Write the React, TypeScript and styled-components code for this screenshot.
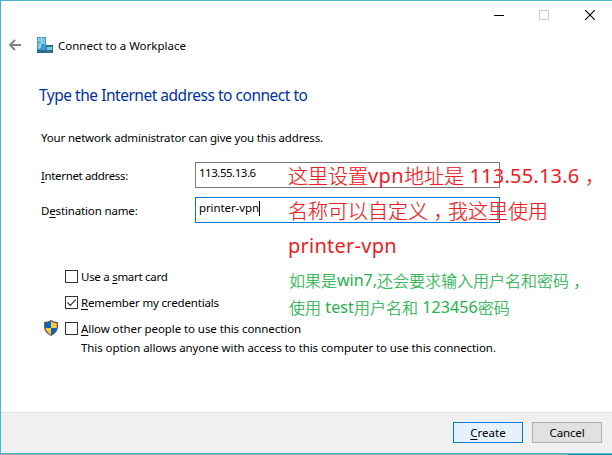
import React from "react";
import styled, { createGlobalStyle } from "styled-components";

const GlobalStyle = createGlobalStyle`
  * { box-sizing: border-box; }
  body { margin: 0; background: #fff; overflow: hidden; }
`;

const Window = styled.div`
  position: relative;
  width: 612px;
  height: 455px;
  display: flex;
  flex-direction: column;
  background: #fff;
  border-top: 1px solid #4bb6c6;
  border-left: 1px solid #4bb6c6;
  color: #000;
  font: 11.5px/16px "Noto Sans", "Open Sans", sans-serif;
`;

const TitleBar = styled.div`
  display: grid;
  grid-template-columns: 45px 46px 10px;
  justify-content: end;
  height: 29px;
  padding: 9px 17px 0 0;
`;

const Header = styled.header`
  display: flex;
  align-items: center;
  height: 30px;
  padding-left: 7px;
`;

const Title = styled.span`
  padding-top: 2px;
`;

const BackIcon = styled.svg`
  width: 14px;
  height: 12px;
  margin-right: 15px;
`;

const BuildingIcon = styled.svg`
  width: 16px;
  height: 16px;
  margin-right: 5px;
`;

const Text = styled.span<{ $ls?: number }>`
  white-space: pre;
  letter-spacing: ${(p) => p.$ls ?? 0}px;
  u { text-underline-offset: 2px; text-decoration-thickness: 1px; text-decoration-skip-ink: none; }
`;

const Body = styled.main`
  flex: 1;
  display: flex;
  flex-direction: column;
  padding: 23px 0 0 40px;
`;

const Heading = styled.h1`
  margin: 0 0 0 -2px;
  height: 24px;
  font-size: 15.5px;
  line-height: 24px;
  font-weight: 400;
  color: #003399;
`;

const Intro = styled.p`
  margin: 23px 0 16px;
  height: 16px;
`;

const Field = styled.label`
  display: flex;
  align-items: center;
  height: 26px;
  margin-bottom: 9px;
`;

const FieldLabel = styled.span`
  width: 154px;
  padding-top: 1px;
`;

const Input = styled.span<{ $focused?: boolean }>`
  display: flex;
  width: 305px;
  height: 26px;
  padding: 2px 0 0 3px;
  border: 1px solid ${(p) => (p.$focused ? "#0078d7" : "#7a7a7a")};
`;

const Caret = styled.i`
  width: 1px;
  height: 15px;
  margin-top: 1px;
  background: #000;
`;

const Options = styled.div`
  display: flex;
  flex-direction: column;
  padding-top: 31px;
`;

const Option = styled.label`
  display: flex;
  align-items: center;
  height: 26px;
`;

const OptionText = styled(Text)`
  padding-top: 1px;
`;

const ShieldSlot = styled.span`
  display: flex;
  width: 24px;
  padding-left: 3px;
`;

const Box = styled.span`
  display: flex;
  width: 13px;
  height: 13px;
  margin-right: 3px;
  border: 1px solid #333;
`;

const Note = styled.p`
  margin: -1px 0 0 40px;
`;

const Footer = styled.footer`
  display: flex;
  justify-content: flex-end;
  gap: 9px;
  height: 41px;
  padding: 9px 10px 0 0;
  background: #f0f0f0;
  border-top: 1px solid #dfdfdf;
`;

const Button = styled.button<{ $primary?: boolean }>`
  width: 70px;
  height: 21px;
  padding: 0;
  border: 1px solid ${(p) => (p.$primary ? "#0078d7" : "#adadad")};
  background: ${(p) => (p.$primary ? "#e5f1fb" : "#e1e1e1")};
  color: #000;
  font: inherit;
`;

const BottomEdge = styled.div`
  height: 2px;
  margin-left: -1px;
  border-top: 1px solid #4bb6c6;
  background: linear-gradient(90deg, #9aa5ae 0 568px, #2d86b5 568px);
`;

const Annotation = styled.div<{ $left: number; $top: number; $size: number; $line: number; $color: string }>`
  position: absolute;
  left: ${(p) => p.$left}px;
  top: ${(p) => p.$top}px;
  color: ${(p) => p.$color};
  font: 300 ${(p) => p.$size}px/${(p) => p.$line}px "Noto Sans CJK SC", sans-serif;
  -webkit-text-stroke: 0.2px currentColor;
`;

const Line = styled.div`
  display: flex;
  white-space: pre;
`;

const Latin = styled.span<{ $ls?: number }>`
  font-family: "Noto Sans", sans-serif;
  font-weight: 400;
  letter-spacing: ${(p) => p.$ls ?? 0}px;
  -webkit-text-stroke: 0;
`;

const Comma = styled.span`
  width: 1em;
  padding-left: 0.27em;
  font-feature-settings: "halt";
`;

function Shield() {
  return (
    <svg width="14" height="16" viewBox="0 0 14 16">
      <path d="M7 .5Q9.500 2.400 13.500 2.500V7Q13.200 12.500 7 15.500Q.8 12.500 .5 7V2.500Q4.500 2.400 7 .5Z" fill="#ffc83d" />
      <path d="M7 1V8H1V3Q5 2.700 7 1ZM7 8H13Q12.300 12.400 7 15Z" fill="#0067c5" />
      <path d="M7 .7Q9.500 2.500 13.300 2.600V7Q13 12.300 7 15.300Q1 12.300 .7 7V2.600Q4.500 2.500 7 .7Z" fill="none" stroke="#555" strokeWidth="1.200" />
    </svg>
  );
}

export default function App() {
  return (
    <>
      <GlobalStyle />
      <Window>
        <TitleBar>
          <svg width="10" height="10"><path d="M0 5.500H10" stroke="#000" /></svg>
          <svg width="10" height="10"><rect x=".5" y=".5" width="9" height="9" fill="none" stroke="#ccc" /></svg>
          <svg width="10" height="10"><path d="M0 0L10 10M10 0L0 10" stroke="#000" strokeWidth="1.100" /></svg>
        </TitleBar>
        <Header>
          <BackIcon viewBox="0 0 14 12"><path d="M7 1L2 6L7 11M2 6H13" fill="none" stroke="#838383" strokeWidth="1.900" /></BackIcon>
          <BuildingIcon viewBox="0 0 16 16">
            <path d="M0 0H9V15H0Z" fill="#3f9cca" />
            <path d="M1 1H4V5H1ZM5 1H8V7H5ZM1 6H4V11H1Z" fill="#7cc6e6" />
            <path d="M4.500 0V6L2 12" stroke="#c7e9f5" strokeWidth=".8" fill="none" />
            <path d="M0 13H9V16H0Z" fill="#256d96" />
            <path d="M9 8H16V16H9Z" fill="#386d86" />
            <path d="M10 10H15V13H10Z" fill="#80c5df" />
          </BuildingIcon>
          <Title><Text>Connect to a Workplace</Text></Title>
        </Header>
        <Body>
          <Heading><Text $ls={-0.48}>Type the Internet address to connect to</Text></Heading>
          <Intro><Text $ls={-0.17}>Your network administrator can give you this address.</Text></Intro>
          <Field>
            <FieldLabel><Text $ls={-0.35}><u>I</u>nternet address:</Text></FieldLabel>
            <Input><Text $ls={-0.48}>113.55.13.6</Text></Input>
          </Field>
          <Field>
            <FieldLabel><Text $ls={-0.15}>D<u>e</u>stination name:</Text></FieldLabel>
            <Input $focused><Text $ls={-0.1}>printer-vpn</Text><Caret /></Input>
          </Field>
          <Options>
            <Option><ShieldSlot /><Box /><OptionText $ls={-0.28}>Use a <u>s</u>mart card</OptionText></Option>
            <Option><ShieldSlot /><Box><svg width="11" height="11"><path d="M1.500 5.500L4.300 8.300L9.700 2.700" fill="none" stroke="#333" strokeWidth="1.200" /></svg></Box><OptionText $ls={-0.17}><u>R</u>emember my credentials</OptionText></Option>
            <Option><ShieldSlot><Shield /></ShieldSlot><Box /><OptionText $ls={-0.08}><u>A</u>llow other people to use this connection</OptionText></Option>
            <Note><Text $ls={-0.085}>This option allows anyone with access to this computer to use this connection.</Text></Note>
          </Options>
        </Body>
        <Footer>
          <Button $primary><Text><u>C</u>reate</Text></Button>
          <Button><Text $ls={-0.15}>Cancel</Text></Button>
        </Footer>
        <BottomEdge />
        <Annotation $left={287} $top={157} $size={20} $line={35} $color="#ed1c24">
          <Line>这里设置<Latin $ls={0.4}>vpn</Latin>地址是<Latin $ls={0.22}> 113.55.13.6</Latin><Comma>，</Comma></Line>
          <Line>名称可以自定义<Comma>，</Comma>我这里使用</Line>
          <Line><Latin $ls={0.25}>printer-vpn</Latin></Line>
        </Annotation>
        <Annotation $left={288} $top={266} $size={16} $line={27} $color="#22b14c">
          <Line>如果是<Latin>win7,</Latin>还会要求输入用户名和密码<Comma>，</Comma></Line>
          <Line>使用<Latin $ls={0.1}> test</Latin>用户名和<Latin $ls={0.1}> 123456</Latin>密码</Line>
        </Annotation>
      </Window>
    </>
  );
}
